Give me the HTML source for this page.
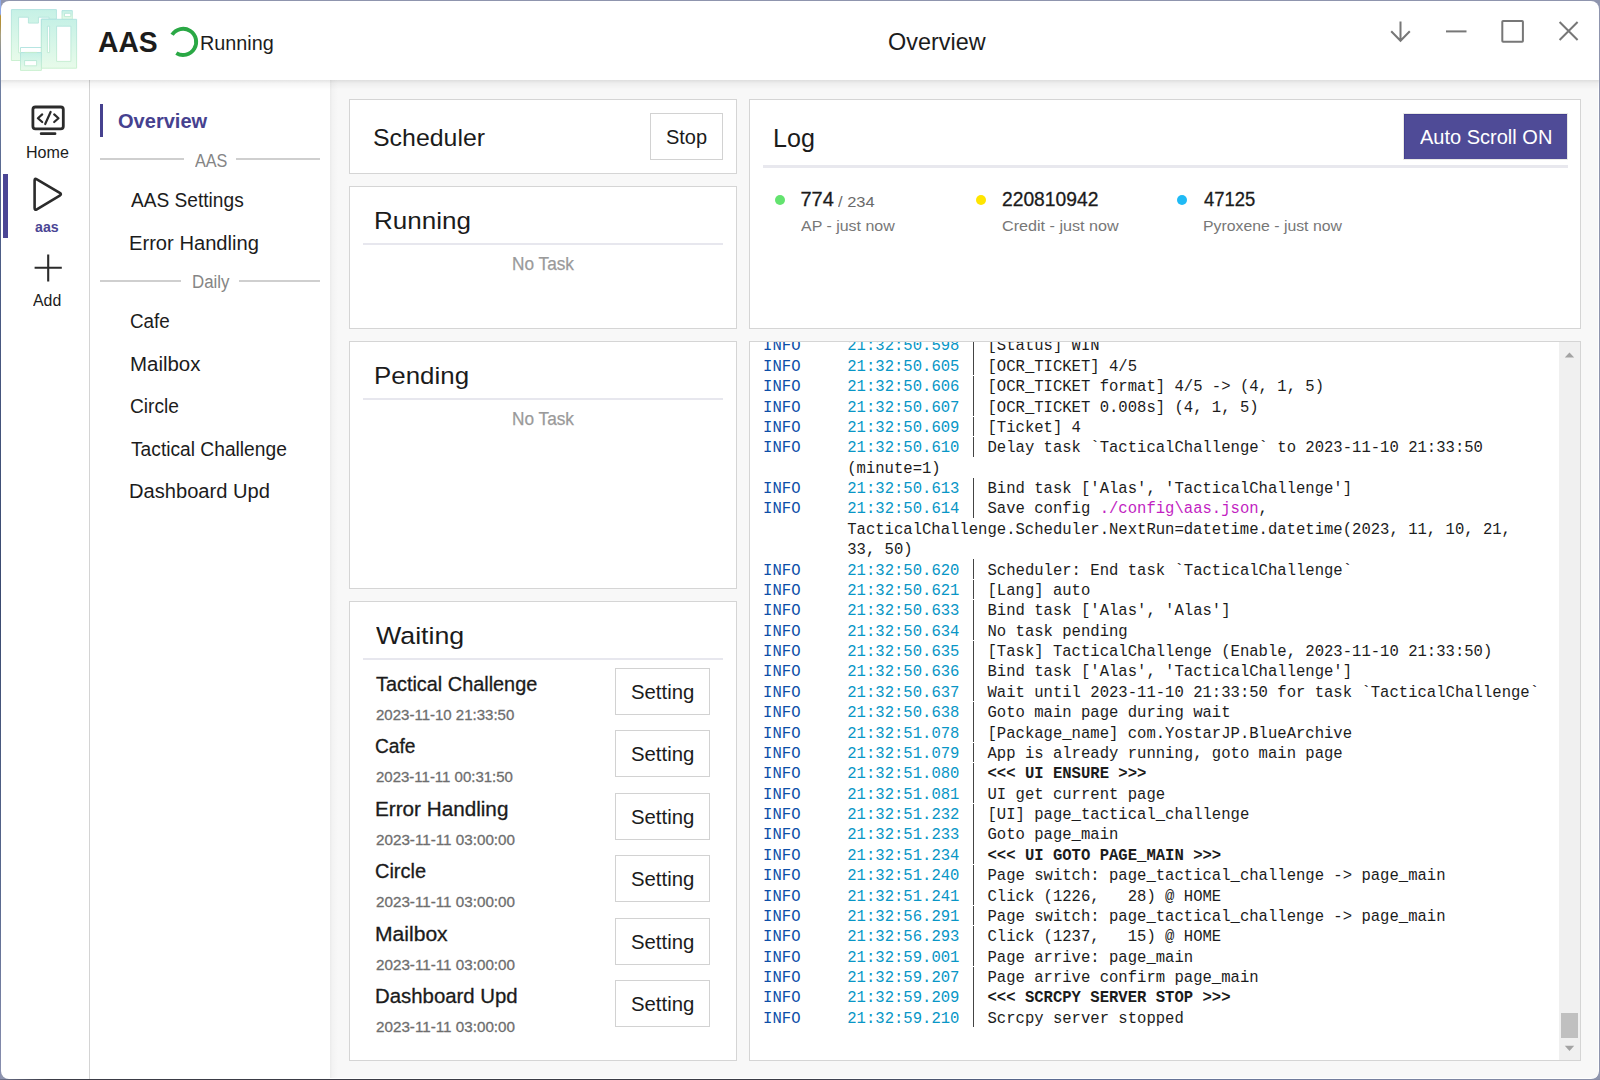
<!DOCTYPE html><html><head><meta charset="utf-8"><title>AAS Overview</title><style>
html,body{margin:0;padding:0;width:1600px;height:1080px;overflow:hidden;background:#8f95ae;}
.t{position:absolute;white-space:pre;}
#win{position:absolute;left:1px;top:1px;width:1598px;height:1078px;background:#fff;border-radius:8px;overflow:hidden;}
</style></head><body>
<div style="position:absolute;left:0;top:0;width:1px;height:1080px;background:linear-gradient(#8fa8e8 0,#8fa8e8 14px,#b89030 16px,#b09040 25px,#a8a080 35px,#7888a8 60px,#50608a 200px,#3a4a70 600px,#5a6a90 900px,#8a90b0 1080px)"></div>
<div style="position:absolute;left:0;top:1079px;width:1600px;height:1px;background:linear-gradient(90deg,#6a6f88 0,#3b3c46 3%,#3b3c46 50%,#5b6b92 65%,#8a8fa8 100%)"></div>
<div id="win">
<div style="position:absolute;left:329px;top:79px;width:1268px;height:998px;background:#f8f8f8"></div>
<div style="position:absolute;left:329px;top:79px;width:8px;height:998px;background:linear-gradient(90deg,#ebebeb,#f3f3f3 30%,#f8f8f8)"></div>
<div style="position:absolute;left:88px;top:79px;width:1px;height:1000px;background:#d4d4d4"></div>
<div style="position:absolute;left:0px;top:79px;width:1598px;height:10px;background:linear-gradient(rgba(0,0,0,0.105),rgba(0,0,0,0.04) 35%,rgba(0,0,0,0))"></div>
</div>
<div style="position:absolute;left:349px;top:99px;width:386px;height:73px;border:1px solid #d5d5d5;background:#fff"></div>
<div style="position:absolute;left:349px;top:186px;width:386px;height:141px;border:1px solid #d5d5d5;background:#fff"></div>
<div style="position:absolute;left:349px;top:341px;width:386px;height:246px;border:1px solid #d5d5d5;background:#fff"></div>
<div style="position:absolute;left:349px;top:601px;width:386px;height:458px;border:1px solid #d5d5d5;background:#fff"></div>
<div style="position:absolute;left:749px;top:99px;width:830px;height:228px;border:1px solid #d5d5d5;background:#fff"></div>
<div style="position:absolute;left:749px;top:341px;width:830px;height:718px;border:1px solid #d5d5d5;background:#fff"></div>
<div style="position:absolute;left:650px;top:113px;width:71px;height:45px;border:1px solid #d2d2d2;background:#fff"></div>
<div style="position:absolute;left:363px;top:243px;width:360px;height:2px;background:#e7e7ee"></div>
<div style="position:absolute;left:363px;top:398px;width:360px;height:2px;background:#e7e7ee"></div>
<div style="position:absolute;left:363px;top:658px;width:360px;height:2px;background:#e7e7ee"></div>
<div style="position:absolute;left:763px;top:165px;width:805px;height:3px;background:#e8e8ee"></div>
<div style="position:absolute;left:615px;top:668px;width:93px;height:45px;border:1px solid #d2d2d2;background:#fff"></div>
<div style="position:absolute;left:615px;top:730px;width:93px;height:45px;border:1px solid #d2d2d2;background:#fff"></div>
<div style="position:absolute;left:615px;top:793px;width:93px;height:45px;border:1px solid #d2d2d2;background:#fff"></div>
<div style="position:absolute;left:615px;top:855px;width:93px;height:45px;border:1px solid #d2d2d2;background:#fff"></div>
<div style="position:absolute;left:615px;top:918px;width:93px;height:45px;border:1px solid #d2d2d2;background:#fff"></div>
<div style="position:absolute;left:615px;top:980px;width:93px;height:45px;border:1px solid #d2d2d2;background:#fff"></div>
<div style="position:absolute;left:1403px;top:113px;width:165px;height:47px;background:#e9e9e6"></div>
<div style="position:absolute;left:1404px;top:114px;width:163px;height:45px;background:#4f4b97;box-shadow:inset 1px 1px 0 #433f8e"></div>
<div style="position:absolute;left:775px;top:195px;width:10px;height:10px;border-radius:50%;background:#63e36f"></div>
<div style="position:absolute;left:976px;top:195px;width:10px;height:10px;border-radius:50%;background:#ffe500"></div>
<div style="position:absolute;left:1177px;top:195px;width:10px;height:10px;border-radius:50%;background:#1fbaf5"></div>
<div style="position:absolute;left:100px;top:158px;width:84px;height:2px;background:#cfcfcf"></div>
<div style="position:absolute;left:236px;top:158px;width:84px;height:2px;background:#cfcfcf"></div>
<div style="position:absolute;left:100px;top:280px;width:81px;height:2px;background:#cfcfcf"></div>
<div style="position:absolute;left:239px;top:280px;width:81px;height:2px;background:#cfcfcf"></div>
<div style="position:absolute;left:3px;top:174px;width:5px;height:64px;background:#4b4695"></div>
<div style="position:absolute;left:100px;top:104px;width:3px;height:33px;background:#46418f"></div>
<div style="position:absolute;left:1559px;top:342px;width:21px;height:718px;background:#f0f0f0"></div>
<div style="position:absolute;left:1561px;top:1013px;width:17px;height:25px;background:#c0c0c0"></div>
<svg style="position:absolute;left:1559px;top:342px" width="21" height="718"><path d="M5.8 15.5 L10.5 10.5 L15.2 15.5Z" fill="#a3a3a3"/><path d="M5.8 703.8 L10.5 709 L15.2 703.8Z" fill="#a3a3a3"/></svg>
<div class="t" style="left:97.81px;top:27px;font-family:'Liberation Sans', sans-serif;font-weight:700;font-size:30px;line-height:30px;color:#1c1c1c;transform:scaleX(0.9426);transform-origin:0 0;">AAS</div>
<div class="t" style="left:199.87px;top:34px;font-family:'Liberation Sans', sans-serif;font-weight:400;font-size:19.5px;line-height:19.5px;color:#1c1c1c;transform:scaleX(1.0157);transform-origin:0 0;">Running</div>
<div class="t" style="left:888.04px;top:30px;font-family:'Liberation Sans', sans-serif;font-weight:400;font-size:24.5px;line-height:24.5px;color:#1c1c1c;transform:scaleX(0.9554);transform-origin:0 0;">Overview</div>
<div class="t" style="left:25.80px;top:145px;font-family:'Liberation Sans', sans-serif;font-weight:400;font-size:16px;line-height:16px;color:#1c1c1c;transform:scaleX(1.0049);transform-origin:0 0;">Home</div>
<div class="t" style="left:35.40px;top:219px;font-family:'Liberation Sans', sans-serif;font-weight:700;font-size:15px;line-height:15px;color:#4a4594;transform:scaleX(0.9440);transform-origin:0 0;">aas</div>
<div class="t" style="left:32.90px;top:293px;font-family:'Liberation Sans', sans-serif;font-weight:400;font-size:16px;line-height:16px;color:#1c1c1c;transform:scaleX(0.9929);transform-origin:0 0;">Add</div>
<div class="t" style="left:118.22px;top:111px;font-family:'Liberation Sans', sans-serif;font-weight:700;font-size:20.5px;line-height:20.5px;color:#46418f;transform:scaleX(0.9778);transform-origin:0 0;">Overview</div>
<div class="t" style="left:194.60px;top:152px;font-family:'Liberation Sans', sans-serif;font-weight:400;font-size:18px;line-height:18px;color:#858585;transform:scaleX(0.9000);transform-origin:0 0;">AAS</div>
<div class="t" style="left:131.00px;top:190px;font-family:'Liberation Sans', sans-serif;font-weight:400;font-size:20px;line-height:20px;color:#1c1c1c;transform:scaleX(0.9564);transform-origin:0 0;">AAS Settings</div>
<div class="t" style="left:128.98px;top:233px;font-family:'Liberation Sans', sans-serif;font-weight:400;font-size:20px;line-height:20px;color:#1c1c1c;transform:scaleX(1.0079);transform-origin:0 0;">Error Handling</div>
<div class="t" style="left:191.56px;top:273px;font-family:'Liberation Sans', sans-serif;font-weight:400;font-size:18px;line-height:18px;color:#858585;transform:scaleX(0.9359);transform-origin:0 0;">Daily</div>
<div class="t" style="left:130.26px;top:311px;font-family:'Liberation Sans', sans-serif;font-weight:400;font-size:20px;line-height:20px;color:#1c1c1c;transform:scaleX(0.9425);transform-origin:0 0;">Cafe</div>
<div class="t" style="left:129.56px;top:354px;font-family:'Liberation Sans', sans-serif;font-weight:400;font-size:20px;line-height:20px;color:#1c1c1c;transform:scaleX(1.0224);transform-origin:0 0;">Mailbox</div>
<div class="t" style="left:130.24px;top:396px;font-family:'Liberation Sans', sans-serif;font-weight:400;font-size:20px;line-height:20px;color:#1c1c1c;transform:scaleX(0.9592);transform-origin:0 0;">Circle</div>
<div class="t" style="left:130.80px;top:439px;font-family:'Liberation Sans', sans-serif;font-weight:400;font-size:20px;line-height:20px;color:#1c1c1c;transform:scaleX(0.9599);transform-origin:0 0;">Tactical Challenge</div>
<div class="t" style="left:128.79px;top:481px;font-family:'Liberation Sans', sans-serif;font-weight:400;font-size:20px;line-height:20px;color:#1c1c1c;transform:scaleX(1.0058);transform-origin:0 0;">Dashboard Upd</div>
<div class="t" style="left:372.78px;top:126px;font-family:'Liberation Sans', sans-serif;font-weight:400;font-size:24.5px;line-height:24.5px;color:#1b1b1b;transform:scaleX(1.0156);transform-origin:0 0;">Scheduler</div>
<div class="t" style="left:665.90px;top:127px;font-family:'Liberation Sans', sans-serif;font-weight:400;font-size:20px;line-height:20px;color:#1b1b1b;">Stop</div>
<div class="t" style="left:374.07px;top:209px;font-family:'Liberation Sans', sans-serif;font-weight:400;font-size:24.5px;line-height:24.5px;color:#1b1b1b;transform:scaleX(1.0636);transform-origin:0 0;">Running</div>
<div class="t" style="left:511.57px;top:255px;font-family:'Liberation Sans', sans-serif;font-weight:400;font-size:18.5px;line-height:18.5px;color:#9a9a9a;transform:scaleX(0.9318);transform-origin:0 0;-webkit-text-stroke:0.25px #9a9a9a;">No Task</div>
<div class="t" style="left:374.09px;top:364px;font-family:'Liberation Sans', sans-serif;font-weight:400;font-size:24.5px;line-height:24.5px;color:#1b1b1b;transform:scaleX(1.0570);transform-origin:0 0;">Pending</div>
<div class="t" style="left:511.57px;top:410px;font-family:'Liberation Sans', sans-serif;font-weight:400;font-size:18.5px;line-height:18.5px;color:#9a9a9a;transform:scaleX(0.9318);transform-origin:0 0;-webkit-text-stroke:0.25px #9a9a9a;">No Task</div>
<div class="t" style="left:376.20px;top:624px;font-family:'Liberation Sans', sans-serif;font-weight:400;font-size:24.5px;line-height:24.5px;color:#1b1b1b;transform:scaleX(1.0924);transform-origin:0 0;">Waiting</div>
<div class="t" style="left:376.00px;top:674px;font-family:'Liberation Sans', sans-serif;font-weight:400;font-size:20.5px;line-height:20.5px;color:#1b1b1b;transform:scaleX(0.9693);transform-origin:0 0;-webkit-text-stroke:0.3px #1b1b1b;">Tactical Challenge</div>
<div class="t" style="left:376.00px;top:707px;font-family:'Liberation Sans', sans-serif;font-weight:400;font-size:15.5px;line-height:15.5px;color:#6e6e6e;transform:scaleX(0.9685);transform-origin:0 0;-webkit-text-stroke:0.3px #6e6e6e;">2023-11-10 21:33:50</div>
<div class="t" style="left:630.98px;top:682px;font-family:'Liberation Sans', sans-serif;font-weight:400;font-size:20px;line-height:20px;color:#1b1b1b;transform:scaleX(1.0167);transform-origin:0 0;">Setting</div>
<div class="t" style="left:375.06px;top:736px;font-family:'Liberation Sans', sans-serif;font-weight:400;font-size:20.5px;line-height:20.5px;color:#1b1b1b;transform:scaleX(0.9357);transform-origin:0 0;-webkit-text-stroke:0.3px #1b1b1b;">Cafe</div>
<div class="t" style="left:376.00px;top:769px;font-family:'Liberation Sans', sans-serif;font-weight:400;font-size:15.5px;line-height:15.5px;color:#6e6e6e;transform:scaleX(0.9667);transform-origin:0 0;-webkit-text-stroke:0.3px #6e6e6e;">2023-11-11 00:31:50</div>
<div class="t" style="left:630.98px;top:744px;font-family:'Liberation Sans', sans-serif;font-weight:400;font-size:20px;line-height:20px;color:#1b1b1b;transform:scaleX(1.0167);transform-origin:0 0;">Setting</div>
<div class="t" style="left:374.99px;top:799px;font-family:'Liberation Sans', sans-serif;font-weight:400;font-size:20.5px;line-height:20.5px;color:#1b1b1b;transform:scaleX(1.0092);transform-origin:0 0;-webkit-text-stroke:0.3px #1b1b1b;">Error Handling</div>
<div class="t" style="left:376.00px;top:832px;font-family:'Liberation Sans', sans-serif;font-weight:400;font-size:15.5px;line-height:15.5px;color:#6e6e6e;transform:scaleX(0.9816);transform-origin:0 0;-webkit-text-stroke:0.3px #6e6e6e;">2023-11-11 03:00:00</div>
<div class="t" style="left:630.98px;top:807px;font-family:'Liberation Sans', sans-serif;font-weight:400;font-size:20px;line-height:20px;color:#1b1b1b;transform:scaleX(1.0167);transform-origin:0 0;">Setting</div>
<div class="t" style="left:375.03px;top:861px;font-family:'Liberation Sans', sans-serif;font-weight:400;font-size:20.5px;line-height:20.5px;color:#1b1b1b;transform:scaleX(0.9745);transform-origin:0 0;-webkit-text-stroke:0.3px #1b1b1b;">Circle</div>
<div class="t" style="left:376.00px;top:894px;font-family:'Liberation Sans', sans-serif;font-weight:400;font-size:15.5px;line-height:15.5px;color:#6e6e6e;transform:scaleX(0.9816);transform-origin:0 0;-webkit-text-stroke:0.3px #6e6e6e;">2023-11-11 03:00:00</div>
<div class="t" style="left:630.98px;top:869px;font-family:'Liberation Sans', sans-serif;font-weight:400;font-size:20px;line-height:20px;color:#1b1b1b;transform:scaleX(1.0167);transform-origin:0 0;">Setting</div>
<div class="t" style="left:374.97px;top:924px;font-family:'Liberation Sans', sans-serif;font-weight:400;font-size:20.5px;line-height:20.5px;color:#1b1b1b;transform:scaleX(1.0286);transform-origin:0 0;-webkit-text-stroke:0.3px #1b1b1b;">Mailbox</div>
<div class="t" style="left:376.00px;top:957px;font-family:'Liberation Sans', sans-serif;font-weight:400;font-size:15.5px;line-height:15.5px;color:#6e6e6e;transform:scaleX(0.9816);transform-origin:0 0;-webkit-text-stroke:0.3px #6e6e6e;">2023-11-11 03:00:00</div>
<div class="t" style="left:630.98px;top:932px;font-family:'Liberation Sans', sans-serif;font-weight:400;font-size:20px;line-height:20px;color:#1b1b1b;transform:scaleX(1.0167);transform-origin:0 0;">Setting</div>
<div class="t" style="left:375.01px;top:986px;font-family:'Liberation Sans', sans-serif;font-weight:400;font-size:20.5px;line-height:20.5px;color:#1b1b1b;transform:scaleX(0.9937);transform-origin:0 0;-webkit-text-stroke:0.3px #1b1b1b;">Dashboard Upd</div>
<div class="t" style="left:376.00px;top:1019px;font-family:'Liberation Sans', sans-serif;font-weight:400;font-size:15.5px;line-height:15.5px;color:#6e6e6e;transform:scaleX(0.9816);transform-origin:0 0;-webkit-text-stroke:0.3px #6e6e6e;">2023-11-11 03:00:00</div>
<div class="t" style="left:630.98px;top:994px;font-family:'Liberation Sans', sans-serif;font-weight:400;font-size:20px;line-height:20px;color:#1b1b1b;transform:scaleX(1.0167);transform-origin:0 0;">Setting</div>
<div class="t" style="left:800.40px;top:189px;font-family:'Liberation Sans', sans-serif;font-weight:400;font-size:20px;line-height:20px;color:#1b1b1b;-webkit-text-stroke:0.3px #1b1b1b;">774</div>
<div class="t" style="left:837.70px;top:194px;font-family:'Liberation Sans', sans-serif;font-weight:400;font-size:15.5px;line-height:15.5px;color:#6a6a6a;transform:scaleX(1.0618);transform-origin:0 0;">/ 234</div>
<div class="t" style="left:800.90px;top:218px;font-family:'Liberation Sans', sans-serif;font-weight:400;font-size:15.5px;line-height:15.5px;color:#777777;transform:scaleX(1.0297);transform-origin:0 0;">AP - just now</div>
<div class="t" style="left:1002.04px;top:189px;font-family:'Liberation Sans', sans-serif;font-weight:400;font-size:20px;line-height:20px;color:#1b1b1b;transform:scaleX(0.9626);transform-origin:0 0;-webkit-text-stroke:0.3px #1b1b1b;">220810942</div>
<div class="t" style="left:1001.76px;top:218px;font-family:'Liberation Sans', sans-serif;font-weight:400;font-size:15.5px;line-height:15.5px;color:#777777;transform:scaleX(1.0423);transform-origin:0 0;">Credit - just now</div>
<div class="t" style="left:1203.70px;top:189px;font-family:'Liberation Sans', sans-serif;font-weight:400;font-size:20px;line-height:20px;color:#1b1b1b;transform:scaleX(0.9218);transform-origin:0 0;-webkit-text-stroke:0.3px #1b1b1b;">47125</div>
<div class="t" style="left:1203.28px;top:218px;font-family:'Liberation Sans', sans-serif;font-weight:400;font-size:15.5px;line-height:15.5px;color:#777777;transform:scaleX(1.0207);transform-origin:0 0;">Pyroxene - just now</div>
<div class="t" style="left:772.77px;top:125px;font-family:'Liberation Sans', sans-serif;font-weight:400;font-size:26px;line-height:26px;color:#1b1b1b;transform:scaleX(0.9650);transform-origin:0 0;">Log</div>
<div class="t" style="left:1419.70px;top:127px;font-family:'Liberation Sans', sans-serif;font-weight:400;font-size:20.5px;line-height:20.5px;color:#ffffff;transform:scaleX(0.9761);transform-origin:0 0;">Auto Scroll ON</div>
<svg style="position:absolute;left:1380px;top:10px" width="210" height="45" viewBox="1380 10 210 45" fill="none" stroke="#777" stroke-width="2">
<path d="M1400.5 21.5 V40.5 M1391.2 31.2 L1400.5 40.8 L1409.8 31.2"/>
<path d="M1446 31.4 H1466.5"/>
<rect x="1502.3" y="21" width="20.6" height="20.8" rx="0.8"/>
<path d="M1559.6 22 L1577.6 40 M1577.6 22 L1559.6 40"/>
</svg>
<svg style="position:absolute;left:160px;top:20px" width="45" height="45" viewBox="160 20 45 45"><path d="M172.11 34.77 A13.1 13.1 0 1 1 176.35 53.13" fill="none" stroke="#2aa845" stroke-width="3.9"/></svg>
<svg style="position:absolute;left:20px;top:95px" width="60" height="200" viewBox="20 95 60 200" fill="none" stroke="#2b2b2b" stroke-linecap="round" stroke-linejoin="round">
<rect x="32.9" y="107" width="30.4" height="21.8" rx="2.6" stroke-width="2.8"/>
<path d="M41.2 133.7 H55" stroke-width="2.8"/>
<path d="M42.2 114.4 L37.9 118.2 L42.2 122" stroke-width="2.2"/>
<path d="M54.2 114.4 L58.5 118.2 L54.2 122" stroke-width="2.2"/>
<path d="M50.6 112 L45.2 124" stroke-width="2.2"/>
<path d="M34.6 180.6 Q34.6 178 36.84 179.32 L59.76 192.98 Q62 194.3 59.76 195.62 L36.84 209.28 Q34.6 210.6 34.6 208 Z" stroke-width="2.6"/>
<path d="M34.6 267.8 H61.8 M48.2 254.4 V281.4" stroke-width="2.1" stroke-linecap="butt"/>
</svg>
<svg style="position:absolute;left:0;top:0" width="90" height="80" viewBox="0 0 90 80">
<defs><linearGradient id="lg" x1="0" y1="0" x2="0" y2="1"><stop offset="0" stop-color="#c6f1e6"/><stop offset="1" stop-color="#e8fbea"/></linearGradient>
<linearGradient id="ls" x1="0" y1="0" x2="0" y2="1"><stop offset="0" stop-color="#aee2df"/><stop offset="1" stop-color="#c6efcd"/></linearGradient></defs>
<g fill="url(#lg)" stroke="url(#ls)" stroke-width="0.9">
<path d="M11.4 9.6 H56.4 V19.2 H41.4 V60.5 H11.4 Z M18.6 17.2 V52.8 H41.4 V19.2 H49.1 V17.2 H38.4 V23.1 H28.4 V17.2 Z" fill-rule="evenodd"/>
<path d="M62 10.6 H72.3 V19.3 H62 Z M64.5 13.3 V16.6 H70.8 V13.3 Z" fill-rule="evenodd"/>
<path d="M41.4 19.3 H76.6 V68.2 H41.4 Z M56.6 26.2 V61.4 H70.9 V26.2 Z M47.4 26.2 V52.6 H49.6 V26.2 Z" fill-rule="evenodd"/>
<path d="M20.5 52.6 H41.4 V70.4 H20.5 Z M24.6 60.6 V65.8 H36.6 V60.6 Z" fill-rule="evenodd"/>
<path d="M20.5 52.6 V47.5 H41.4 M24.6 52.4 H37" fill="none"/>
</g></svg>
<div style="position:absolute;left:750px;top:342px;width:809px;height:718px;overflow:hidden">
<pre style="position:absolute;margin:0;left:13.10px;top:-5.60px;font-family:'Liberation Mono', monospace;font-size:15.58px;line-height:20.376px;color:#1c1c1c;letter-spacing:0px"><span class="i">INFO</span>     <span class="ts">21:32:50.598</span>   [Status] WIN
<span class="i">INFO</span>     <span class="ts">21:32:50.605</span>   [OCR_TICKET] 4/5
<span class="i">INFO</span>     <span class="ts">21:32:50.606</span>   [OCR_TICKET format] 4/5 -&gt; (4, 1, 5)
<span class="i">INFO</span>     <span class="ts">21:32:50.607</span>   [OCR_TICKET 0.008s] (4, 1, 5)
<span class="i">INFO</span>     <span class="ts">21:32:50.609</span>   [Ticket] 4
<span class="i">INFO</span>     <span class="ts">21:32:50.610</span>   Delay task `TacticalChallenge` to 2023-11-10 21:33:50
         (minute=1)
<span class="i">INFO</span>     <span class="ts">21:32:50.613</span>   Bind task [&#x27;Alas&#x27;, &#x27;TacticalChallenge&#x27;]
<span class="i">INFO</span>     <span class="ts">21:32:50.614</span>   Save config <span style="color:#c21fc2">./config\aas.json</span>,
         TacticalChallenge.Scheduler.NextRun=datetime.datetime(2023, 11, 10, 21,
         33, 50)
<span class="i">INFO</span>     <span class="ts">21:32:50.620</span>   Scheduler: End task `TacticalChallenge`
<span class="i">INFO</span>     <span class="ts">21:32:50.621</span>   [Lang] auto
<span class="i">INFO</span>     <span class="ts">21:32:50.633</span>   Bind task [&#x27;Alas&#x27;, &#x27;Alas&#x27;]
<span class="i">INFO</span>     <span class="ts">21:32:50.634</span>   No task pending
<span class="i">INFO</span>     <span class="ts">21:32:50.635</span>   [Task] TacticalChallenge (Enable, 2023-11-10 21:33:50)
<span class="i">INFO</span>     <span class="ts">21:32:50.636</span>   Bind task [&#x27;Alas&#x27;, &#x27;TacticalChallenge&#x27;]
<span class="i">INFO</span>     <span class="ts">21:32:50.637</span>   Wait until 2023-11-10 21:33:50 for task `TacticalChallenge`
<span class="i">INFO</span>     <span class="ts">21:32:50.638</span>   Goto main page during wait
<span class="i">INFO</span>     <span class="ts">21:32:51.078</span>   [Package_name] com.YostarJP.BlueArchive
<span class="i">INFO</span>     <span class="ts">21:32:51.079</span>   App is already running, goto main page
<span class="i">INFO</span>     <span class="ts">21:32:51.080</span>   <b>&lt;&lt;&lt; UI ENSURE &gt;&gt;&gt;</b>
<span class="i">INFO</span>     <span class="ts">21:32:51.081</span>   UI get current page
<span class="i">INFO</span>     <span class="ts">21:32:51.232</span>   [UI] page_tactical_challenge
<span class="i">INFO</span>     <span class="ts">21:32:51.233</span>   Goto page_main
<span class="i">INFO</span>     <span class="ts">21:32:51.234</span>   <b>&lt;&lt;&lt; UI GOTO PAGE_MAIN &gt;&gt;&gt;</b>
<span class="i">INFO</span>     <span class="ts">21:32:51.240</span>   Page switch: page_tactical_challenge -&gt; page_main
<span class="i">INFO</span>     <span class="ts">21:32:51.241</span>   Click (1226,   28) @ HOME
<span class="i">INFO</span>     <span class="ts">21:32:56.291</span>   Page switch: page_tactical_challenge -&gt; page_main
<span class="i">INFO</span>     <span class="ts">21:32:56.293</span>   Click (1237,   15) @ HOME
<span class="i">INFO</span>     <span class="ts">21:32:59.001</span>   Page arrive: page_main
<span class="i">INFO</span>     <span class="ts">21:32:59.207</span>   Page arrive confirm page_main
<span class="i">INFO</span>     <span class="ts">21:32:59.209</span>   <b>&lt;&lt;&lt; SCRCPY SERVER STOP &gt;&gt;&gt;</b>
<span class="i">INFO</span>     <span class="ts">21:32:59.210</span>   Scrcpy server stopped</pre>
<div style="position:absolute;left:223px;top:-7px;width:1px;height:20px;background:#444"></div>
<div style="position:absolute;left:223px;top:13px;width:1px;height:20px;background:#444"></div>
<div style="position:absolute;left:223px;top:34px;width:1px;height:20px;background:#444"></div>
<div style="position:absolute;left:223px;top:54px;width:1px;height:20px;background:#444"></div>
<div style="position:absolute;left:223px;top:75px;width:1px;height:19px;background:#444"></div>
<div style="position:absolute;left:223px;top:95px;width:1px;height:20px;background:#444"></div>
<div style="position:absolute;left:223px;top:136px;width:1px;height:20px;background:#444"></div>
<div style="position:absolute;left:223px;top:156px;width:1px;height:20px;background:#444"></div>
<div style="position:absolute;left:223px;top:217px;width:1px;height:20px;background:#444"></div>
<div style="position:absolute;left:223px;top:238px;width:1px;height:19px;background:#444"></div>
<div style="position:absolute;left:223px;top:258px;width:1px;height:20px;background:#444"></div>
<div style="position:absolute;left:223px;top:278px;width:1px;height:20px;background:#444"></div>
<div style="position:absolute;left:223px;top:299px;width:1px;height:20px;background:#444"></div>
<div style="position:absolute;left:223px;top:319px;width:1px;height:20px;background:#444"></div>
<div style="position:absolute;left:223px;top:339px;width:1px;height:20px;background:#444"></div>
<div style="position:absolute;left:223px;top:360px;width:1px;height:20px;background:#444"></div>
<div style="position:absolute;left:223px;top:380px;width:1px;height:20px;background:#444"></div>
<div style="position:absolute;left:223px;top:401px;width:1px;height:19px;background:#444"></div>
<div style="position:absolute;left:223px;top:421px;width:1px;height:20px;background:#444"></div>
<div style="position:absolute;left:223px;top:441px;width:1px;height:20px;background:#444"></div>
<div style="position:absolute;left:223px;top:462px;width:1px;height:20px;background:#444"></div>
<div style="position:absolute;left:223px;top:482px;width:1px;height:20px;background:#444"></div>
<div style="position:absolute;left:223px;top:502px;width:1px;height:20px;background:#444"></div>
<div style="position:absolute;left:223px;top:523px;width:1px;height:20px;background:#444"></div>
<div style="position:absolute;left:223px;top:543px;width:1px;height:20px;background:#444"></div>
<div style="position:absolute;left:223px;top:564px;width:1px;height:19px;background:#444"></div>
<div style="position:absolute;left:223px;top:584px;width:1px;height:20px;background:#444"></div>
<div style="position:absolute;left:223px;top:604px;width:1px;height:20px;background:#444"></div>
<div style="position:absolute;left:223px;top:625px;width:1px;height:20px;background:#444"></div>
<div style="position:absolute;left:223px;top:645px;width:1px;height:20px;background:#444"></div>
<div style="position:absolute;left:223px;top:665px;width:1px;height:20px;background:#444"></div>
</div>
<style>.i{color:#0b4ea8}.ts{color:#0896c6}pre b{font-weight:700}</style>
</body></html>
